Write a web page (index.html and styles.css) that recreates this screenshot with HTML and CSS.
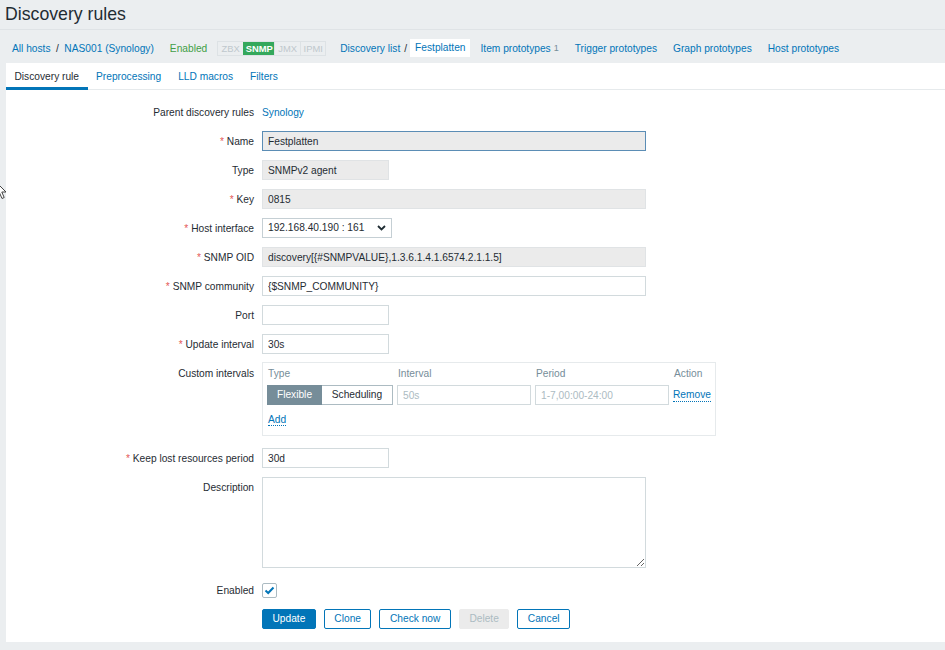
FILE: index.html
```html
<!DOCTYPE html>
<html>
<head>
<meta charset="utf-8">
<link rel="stylesheet" href="styles.css">
</head>
<body>
<h1 class="page-title">Discovery rules</h1>
<nav class="crumbs">
  <a class="link" href="#">All hosts</a><span class="sep">/</span><a class="link" href="#">NAS001 (Synology)</a>
  <span class="status-enabled">Enabled</span>
  <span class="status-box"><span class="st st-zbx">ZBX</span><span class="st st-snmp">SNMP</span><span class="st st-jmx">JMX</span><span class="st st-ipmi">IPMI</span></span>
  <a class="link list-link" href="#">Discovery list</a><span class="sep sep-tight">/</span><span class="current">Festplatten</span>
  <a class="link nav-item first-item" href="#">Item prototypes</a><sup class="count">1</sup>
  <a class="link nav-item" href="#">Trigger prototypes</a>
  <a class="link nav-item" href="#">Graph prototypes</a>
  <a class="link nav-item" href="#">Host prototypes</a>
</nav>

<main class="content">
  <div class="tabs">
    <span class="tab active">Discovery rule</span>
    <a class="tab" href="#">Preprocessing</a>
    <a class="tab" href="#">LLD macros</a>
    <a class="tab" href="#">Filters</a>
  </div>

  <div class="form">
    <label class="lbl">Parent discovery rules</label>
    <div class="fld"><a class="link" href="#">Synology</a></div>

    <label class="lbl req">Name</label>
    <div class="fld"><input class="inp wide ro focus" value="Festplatten" readonly></div>

    <label class="lbl">Type</label>
    <div class="fld"><input class="inp short ro" value="SNMPv2 agent" readonly></div>

    <label class="lbl req">Key</label>
    <div class="fld"><input class="inp wide ro" value="0815" readonly></div>

    <label class="lbl req">Host interface</label>
    <div class="fld">
      <div class="select"><span>192.168.40.190 : 161</span>
        <svg width="9" height="6" viewBox="0 0 9 6"><path d="M1 1 L4.5 4.5 L8 1" fill="none" stroke="#1f2c33" stroke-width="1.8"/></svg>
      </div>
    </div>

    <label class="lbl req">SNMP OID</label>
    <div class="fld"><input class="inp wide ro" value="discovery[{#SNMPVALUE},1.3.6.1.4.1.6574.2.1.1.5]" readonly></div>

    <label class="lbl req">SNMP community</label>
    <div class="fld"><input class="inp wide" value="{$SNMP_COMMUNITY}"></div>

    <label class="lbl">Port</label>
    <div class="fld"><input class="inp short" value=""></div>

    <label class="lbl req">Update interval</label>
    <div class="fld"><input class="inp short" value="30s"></div>

    <label class="lbl">Custom intervals</label>
    <div class="fld">
      <div class="intervals">
        <div class="int-grid">
          <span class="th">Type</span><span class="th">Interval</span><span class="th">Period</span><span class="th">Action</span>
          <div class="seg"><span class="seg-btn on">Flexible</span><span class="seg-btn">Scheduling</span></div>
          <input class="inp ph" placeholder="50s">
          <input class="inp ph" placeholder="1-7,00:00-24:00">
          <a class="link dotted" href="#">Remove</a>
        </div>
        <div class="add-row"><a class="link dotted" href="#">Add</a></div>
      </div>
    </div>

    <label class="lbl req gap-keep">Keep lost resources period</label>
    <div class="fld gap-keep"><input class="inp short" value="30d"></div>

    <label class="lbl">Description</label>
    <div class="fld"><textarea class="txt"></textarea></div>

    <label class="lbl gap-en">Enabled</label>
    <div class="fld gap-en chk-row">
      <span class="chk"><svg width="11" height="9" viewBox="0 0 11 9"><path d="M1.5 4.5 L4.2 7 L9.5 1.5" fill="none" stroke="#0275b8" stroke-width="2"/></svg></span>
    </div>

    <span class="lbl"></span>
    <div class="fld buttons">
      <button class="btn primary">Update</button>
      <button class="btn">Clone</button>
      <button class="btn">Check now</button>
      <button class="btn disabled">Delete</button>
      <button class="btn">Cancel</button>
    </div>
  </div>
</main>

<svg class="cursor" width="12" height="19" viewBox="0 0 12 19"><path d="M1 1 L1 15 L4.5 11.8 L7 17.5 L9.2 16.5 L6.8 11 L11 11 Z" fill="#fff" stroke="#444" stroke-width="1"/></svg>
</body>
</html>
```
FILE: styles.css
```css
* { box-sizing: border-box; }
html, body { margin: 0; padding: 0; }
body {
  width: 945px;
  height: 650px;
  overflow: hidden;
  position: relative;
  background: #ebeef0;
  font-family: "Liberation Sans", Arial, sans-serif;
  font-size: 10.2px;
  color: #1f2c33;
}
a { text-decoration: none; }
.link { color: #0275b8; }

.page-title {
  margin: 0;
  height: 30px;
  padding-left: 5px;
  font-size: 17.7px;
  font-weight: normal;
  line-height: 29px;
  border-bottom: 1px solid #dfe3e6;
  color: #1f2c33;
}

.crumbs {
  display: flex;
  align-items: center;
  height: 33px;
  padding: 3px 0 0 12px;
  white-space: nowrap;
}
.sep { padding: 0 5.5px; color: #1f2c33; }
.sep-tight { padding: 0 3px 0 4px; }
.status-enabled { color: #429e47; margin-left: 16px; }
.status-box {
  display: flex;
  margin-left: 10px;
  height: 15px;
  border: 1px solid #dde2e5;
}
.st {
  display: flex;
  align-items: center;
  justify-content: center;
  font-size: 9.4px;
  color: #bfc8cd;
  border-left: 1px solid #dde2e5;
}
.st:first-child { border-left: 0; }
.st-zbx { width: 25px; }
.st-snmp { width: 31px; background: #34a85c; color: #fff; font-weight: bold; border-left-color: #34a85c; }
.st-jmx { width: 26px; }
.st-ipmi { width: 25px; }
.list-link { margin-left: 14px; }
.current {
  background: #fff;
  height: 18px;
  line-height: 18px;
  padding: 0 4px 0 5px;
  color: #0275b8;
}
.nav-item { margin-left: 16px; }
.first-item { margin-left: 11px; }
.count { font-size: 9px; color: #768d99; margin-left: 3px; vertical-align: baseline; }

.content {
  margin-left: 6px;
  background: #fff;
  height: 579px;
}

.tabs {
  display: flex;
  height: 27px;
  box-shadow: inset 0 -1px 0 #e6eaec;
}
.tab {
  display: block;
  padding: 0 8.5px;
  line-height: 27px;
  color: #0275b8;
}
.tab.active {
  color: #1f2c33;
  box-shadow: inset 0 -3px 0 #0275b8;
}

.form {
  display: grid;
  grid-template-columns: 248px 1fr;
  column-gap: 8px;
  row-gap: 9px;
  padding-top: 12px;
}
.lbl {
  text-align: right;
  line-height: 20px;
  padding-top: 1px;
  height: 20px;
  white-space: nowrap;
  color: #1f2c33;
}
.lbl.req::before { content: "* "; color: #e45959; }
.fld { min-height: 20px; line-height: 20px; }
.fld > .link { display: block; padding-top: 1px; height: 20px; line-height: 20px; }

.inp {
  display: block;
  height: 20px;
  padding: 0 5px;
  border: 1px solid #d2dadd;
  border-radius: 0;
  background: #fff;
  font-family: "Liberation Sans", Arial, sans-serif;
  font-size: 10.2px;
  color: #1f2c33;
  outline: none;
}
.inp.wide { width: 384px; }
.inp.short { width: 127px; }
.inp.ro { background: #ebebeb; border-color: #e0e3e5; }
.inp.focus { border-color: #5b8db5; }
.inp::placeholder { color: #acbbc2; }

.select {
  display: flex;
  align-items: center;
  justify-content: space-between;
  width: 130px;
  height: 20px;
  padding: 0 5px;
  border: 1px solid #c5cfd4;
  background: #fff;
}

.intervals {
  width: 454px;
  margin-top: -1px;
  border: 1px solid #e6eaec;
  padding: 4px 4px 7px 4px;
}
.int-grid {
  display: grid;
  grid-template-columns: 126px 134px 134px auto;
  column-gap: 4px;
  row-gap: 4px;
  align-items: center;
}
.th { line-height: 14px; color: #768d99; padding-left: 1px; }
.int-grid .inp { width: 134px; }
.seg { display: flex; height: 20px; }
.seg-btn {
  display: flex;
  align-items: center;
  justify-content: center;
  height: 20px;
  border: 1px solid #acbbc2;
  color: #1f2c33;
  background: #fff;
}
.seg-btn.on { width: 55px; background: #768d99; border-color: #768d99; color: #fff; }
.seg-btn:last-child { width: 71px; border-left: 0; }
.dotted { border-bottom: 1px dotted #0275b8; line-height: 13px; justify-self: start; }
.add-row { margin-top: 7px; line-height: 16px; padding-left: 1px; }

.gap-keep { margin-top: 3px; }
.gap-en { margin-top: 3px; }

.txt {
  display: block;
  width: 384px;
  height: 91px;
  border: 1px solid #d2dadd;
  resize: vertical;
  font-family: "Liberation Sans", Arial, sans-serif;
  font-size: 10.2px;
}

.chk-row { display: flex; align-items: center; height: 20px; }
.chk {
  display: flex;
  align-items: center;
  justify-content: center;
  width: 15px;
  height: 15px;
  border: 1px solid #acbbc2;
  border-radius: 2px;
  background: #fff;
}

.buttons { display: flex; gap: 8px; }
.btn {
  height: 20px;
  padding: 0 9.5px;
  border: 1px solid #0275b8;
  border-radius: 2px;
  background: #fff;
  color: #0275b8;
  font-family: "Liberation Sans", Arial, sans-serif;
  font-size: 10.2px;
  line-height: 18px;
}
.btn.primary { background: #0275b8; color: #fff; }
.btn.disabled { background: #ebebeb; border-color: #ebebeb; color: #acbbc2; }

.cursor { position: absolute; left: -5px; top: 181px; }
```
